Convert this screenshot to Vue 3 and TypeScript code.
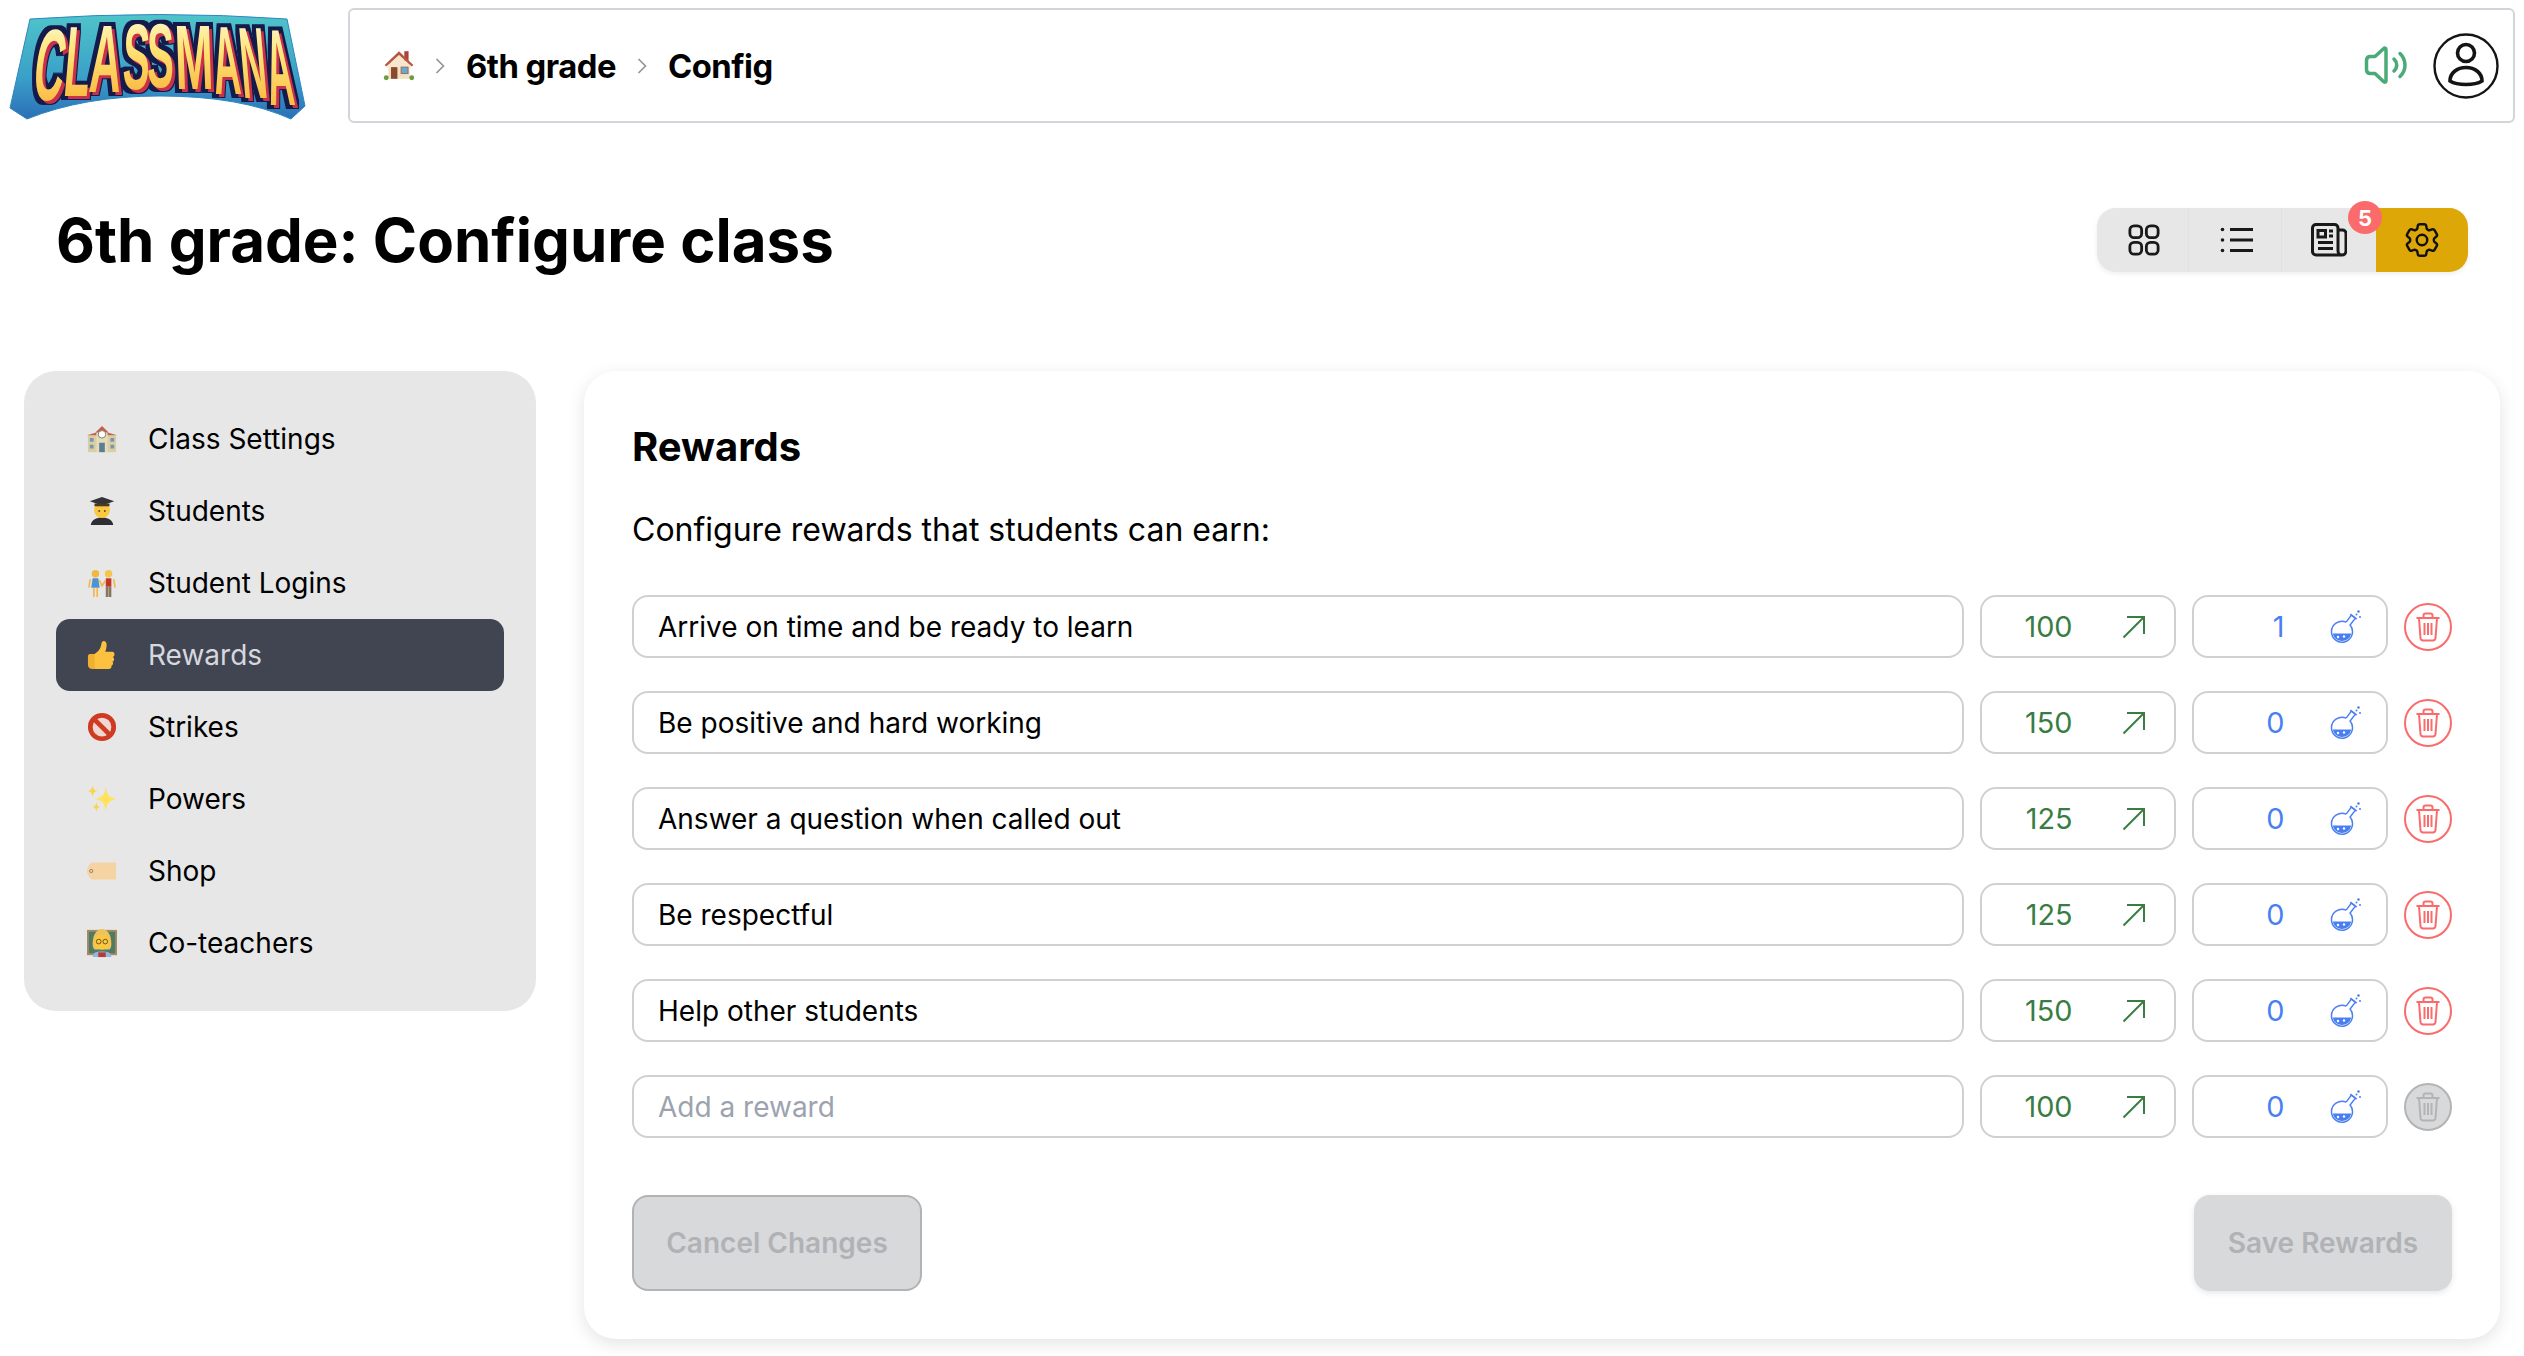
<script setup lang="ts">
interface LogoLetter { ch: string; x: number; w: number; top: number; bottom: number; skew: number; adv: number }
const raw: Array<[string, number, number, number, number, number, number]> = [
  ['C', 27, 30, 27, 100, -7, 72],
  ['L', 58, 26, 24, 96, -5, 61],
  ['A', 84, 32, 23, 92, -3, 72],
  ['S', 118, 27, 22, 89, -2, 67],
  ['S', 147, 27, 22, 87, 0, 67],
  ['M', 176, 38, 23, 89, 2, 83],
  ['A', 215, 27, 24, 94, 4, 72],
  ['N', 243, 26, 25, 98, 5, 72],
  ['A', 270, 26, 27, 105, 6, 72],
]
const letters: LogoLetter[] = raw.map(([ch, x, w, top, bottom, skew, adv]) => ({ ch, x, w, top, bottom, skew, adv }))
const letterTransform = (l: LogoLetter): string =>
  `translate(${l.x + (l.skew < 0 ? 4 : 0)},${l.bottom}) skewX(${l.skew}) scale(${l.w / l.adv},${(l.bottom - l.top) / 72})`

const nav = [
  { key: 'school', label: 'Class Settings' },
  { key: 'student', label: 'Students' },
  { key: 'couple', label: 'Student Logins' },
  { key: 'thumb', label: 'Rewards', active: true },
  { key: 'no', label: 'Strikes' },
  { key: 'spark', label: 'Powers' },
  { key: 'tag', label: 'Shop' },
  { key: 'teacher', label: 'Co-teachers' },
]
const rows = [
  { text: 'Arrive on time and be ready to learn', pts: 100, mana: 1 },
  { text: 'Be positive and hard working', pts: 150, mana: 0 },
  { text: 'Answer a question when called out', pts: 125, mana: 0 },
  { text: 'Be respectful', pts: 125, mana: 0 },
  { text: 'Help other students', pts: 150, mana: 0 },
  { text: 'Add a reward', pts: 100, mana: 0, placeholder: true },
]
</script>

<template>
  <div class="page">
    <header class="top">
      <div class="logo">
        <svg width="320" height="130" viewBox="0 0 320 130">
          <defs>
            <linearGradient id="lf" x1="0" y1="0" x2="0" y2="1">
              <stop offset="0" stop-color="#fffbe6" />
              <stop offset="0.4" stop-color="#ffe678" />
              <stop offset="1" stop-color="#f9ab30" />
            </linearGradient>
            <linearGradient id="lb" x1="0" y1="0" x2="0" y2="1">
              <stop offset="0" stop-color="#4fc4c9" />
              <stop offset="0.6" stop-color="#3aa0c8" />
              <stop offset="1" stop-color="#2a6fb8" />
            </linearGradient>
            <filter id="lfx" x="-8%" y="-25%" width="116%" height="150%" color-interpolation-filters="sRGB">
              <feMorphology in="SourceAlpha" operator="dilate" radius="3.500" result="d1" />
              <feFlood flood-color="#141a4a" />
              <feComposite in2="d1" operator="in" result="navy" />
              <feOffset in="SourceAlpha" dx="2.500" dy="3" result="o1" />
              <feFlood flood-color="#c9304a" />
              <feComposite in2="o1" operator="in" result="red" />
              <feMerge>
                <feMergeNode in="navy" />
                <feMergeNode in="red" />
                <feMergeNode in="SourceGraphic" />
              </feMerge>
            </filter>
          </defs>
          <path class="banner" d="M30 19Q160 10 287 19L305 106 291 119 Q240 96 160 96 Q84 96 27 119L10 108Z" fill="url(#lb)" />
          <g filter="url(#lfx)">
            <text
              v-for="(l, i) in letters"
              :key="i"
              :transform="letterTransform(l)"
              class="logo-letter"
              fill="url(#lf)"
            >{{ l.ch }}</text>
          </g>
        </svg>
      </div>

      <div class="crumbs">
        <svg class="home" width="34" height="34" viewBox="0 0 32 32">
          <rect x="21" y="3" width="4" height="9" fill="#a8463c" />
          <path d="M6 14h20v15H6z" fill="#f3dfc2" />
          <path d="M16 7 5 17v2h22v-2z" fill="#f8e7cd" />
          <path d="M16 3 2.500 16l1.500 1.500L16 6.500 28 17.500l1.500-1.500z" fill="#b9563f" />
          <rect x="8.500" y="18" width="6" height="11" fill="#8a4b2c" />
          <rect x="18" y="18" width="6.500" height="6" fill="#6aa7d8" stroke="#8e7a5f" />
          <circle cx="4" cy="28" r="2.300" fill="#6e9b42" />
          <circle cx="28" cy="28" r="2.300" fill="#6e9b42" />
        </svg>
        <svg class="chev" width="12" height="18" viewBox="0 0 12 18"><path d="m2.500 2 7 7-7 7" /></svg>
        <span class="crumb">6th grade</span>
        <svg class="chev" width="12" height="18" viewBox="0 0 12 18"><path d="m2.500 2 7 7-7 7" /></svg>
        <span class="crumb">Config</span>
        <span class="spacer"></span>
        <svg class="sound" width="44" height="40" viewBox="0 0 44 40">
          <path d="M22 3.500c0-1.600-1.500-1.800-2.500-.8L11 10.500H6.500C4 10.500 2.500 12 2.500 14.500v9c0 2.500 1.500 4 4 4H11l8.500 8c1 1 2.500.8 2.500-.8z" />
          <path d="M30 13c1.800 1.800 2.700 3.800 2.700 6s-.9 4.300-2.700 6" />
          <path d="M36 7.500c3.300 3.200 5 7.100 5 11.500s-1.700 8.300-5 11.500" />
        </svg>
        <svg class="user" width="66" height="66" viewBox="0 0 66 66">
          <circle cx="33" cy="33" r="31.500" class="ring" />
          <circle cx="33" cy="20" r="8.500" />
          <path d="M17 48c0-8 7-13.500 16-13.500S49 40 49 48c-4 2.500-10 3.500-16 3.500S21 50.500 17 48z" />
        </svg>
      </div>
    </header>

    <div class="title-row">
      <h1>6th grade: Configure class</h1>
      <div class="seg">
        <div class="seg-btn w91">
          <svg width="32" height="32" viewBox="0 0 34 34" class="ic">
            <rect x="2" y="2" width="12.500" height="12.500" rx="4.500" />
            <rect x="19.500" y="2" width="12.500" height="12.500" rx="4.500" />
            <rect x="2" y="19.500" width="12.500" height="12.500" rx="4.500" />
            <rect x="19.500" y="19.500" width="12.500" height="12.500" rx="4.500" />
          </svg>
        </div>
        <div class="seg-btn w93">
          <svg width="34" height="28" viewBox="0 0 34 28" class="ic">
            <path d="M10 3.500h23M10 14h23M10 24.500h23" />
            <circle cx="2.500" cy="3.500" r="1.800" class="dot" />
            <circle cx="2.500" cy="14" r="1.800" class="dot" />
            <circle cx="2.500" cy="24.500" r="1.800" class="dot" />
          </svg>
        </div>
        <div class="seg-btn w94">
          <svg width="36" height="34" viewBox="0 0 36 34" class="ic">
            <path d="M27 7h4.500A3.500 3.500 0 0 1 35 10.500V28a4 4 0 0 1-4 4H5a3.500 3.500 0 0 1-3.500-3.500V5A3.500 3.500 0 0 1 5 1.500h18.500A3.500 3.500 0 0 1 27 5v23a4 4 0 0 0 4 4" />
            <rect x="7" y="7.500" width="7.500" height="6.500" />
            <path d="M18 8h4M18 13h4M7 19.500h15M7 25.500h15" />
          </svg>
          <span class="badge">5</span>
        </div>
        <div class="seg-btn active">
          <svg width="42" height="42" viewBox="0 0 24 24" class="gear">
            <path d="M9.594 3.940c.09-.542.56-.94 1.110-.94h2.593c.55 0 1.020.398 1.110.94l.213 1.281c.063.374.313.686.645.87.074.04.147.083.22.127.325.196.72.257 1.075.124l1.217-.456a1.125 1.125 0 0 1 1.370.49l1.296 2.247a1.125 1.125 0 0 1-.26 1.431l-1.003.827c-.293.241-.438.613-.43.992a7.723 7.723 0 0 1 0 .255c-.008.378.137.75.43.991l1.004.827c.424.35.534.955.26 1.430l-1.298 2.247a1.125 1.125 0 0 1-1.369.491l-1.217-.456c-.355-.133-.75-.072-1.076.124a6.470 6.470 0 0 1-.22.128c-.331.183-.581.495-.644.869l-.213 1.281c-.09.543-.56.94-1.110.94h-2.594c-.55 0-1.019-.398-1.110-.94l-.213-1.281c-.062-.374-.312-.686-.644-.87a6.520 6.520 0 0 1-.22-.127c-.325-.196-.72-.257-1.076-.124l-1.217.456a1.125 1.125 0 0 1-1.369-.49l-1.297-2.247a1.125 1.125 0 0 1 .26-1.431l1.004-.827c.292-.24.437-.613.43-.991a6.932 6.932 0 0 1 0-.255c.007-.38-.138-.751-.43-.992l-1.004-.827a1.125 1.125 0 0 1-.26-1.430l1.297-2.247a1.125 1.125 0 0 1 1.370-.491l1.216.456c.356.133.751.072 1.076-.124.072-.044.146-.086.22-.128.332-.183.582-.495.644-.869l.214-1.280Z" />
            <circle cx="12" cy="12" r="3" />
          </svg>
        </div>
      </div>
    </div>

    <main class="body">
      <aside class="side">
        <div v-for="n in nav" :key="n.key" class="nav-item" :class="{ on: n.active }">
          <svg class="emoji" width="30" height="30" viewBox="0 0 32 32">
            <template v-if="n.key === 'school'">
              <path d="M1 12h30v18H1z" fill="#d8cfa6" />
              <path d="M10 9 16 3l6 6v21H10z" fill="#e5dcba" />
              <path d="M0 12 10 9v3zM32 12 22 9v3zM9 9l7-7 7 7z" fill="#c2604c" />
              <circle cx="16" cy="11" r="4" fill="#fff" stroke="#7f7a66" />
              <rect x="13" y="20" width="6" height="10" fill="#5d7c96" />
              <path d="M3 15h4v4H3zM3 22h4v4H3zM25 15h4v4h-4zM25 22h4v4h-4z" fill="#7d95a8" />
            </template>
            <template v-else-if="n.key === 'student'">
              <path d="M4 31c1-6 6-8 12-8s11 2 12 8z" fill="#2f2f33" />
              <circle cx="16" cy="15" r="8.500" fill="#fbc93f" />
              <path d="M16 1 3 5.500 16 10l13-4.500z" fill="#333337" />
              <path d="M8 8h16v3H8z" fill="#4a3a22" />
              <circle cx="13" cy="16" r="1" fill="#543" />
              <circle cx="19" cy="16" r="1" fill="#543" />
            </template>
            <template v-else-if="n.key === 'couple'">
              <circle cx="9" cy="6" r="4" fill="#f0b93c" />
              <circle cx="23" cy="6" r="4" fill="#f4c64e" />
              <path d="M6 11h6l1.500 10h-9z" fill="#4c93d4" />
              <path d="M20 11h6v9h-6z" fill="#c2352b" />
              <path d="M6.500 21h1.800v10H6.500zM10 21h1.800v10H10z" fill="#f2b84a" />
              <path d="M20 20h2.800v11H20zM23.200 20H26v11h-2.800z" fill="#8a7660" />
              <path d="M3.500 12 2 21M28.500 12l1.500 9M13 13l3 6 4-6" stroke="#f2b84a" stroke-width="1.700" fill="none" />
            </template>
            <template v-else-if="n.key === 'thumb'">
              <path d="M3 15c-1 0-2 1-2 2.500V26c0 3 2 5 5 5h14c2 0 3-1 3-2.500H9V15z" fill="#f0b030" />
              <path d="M8 15c3-2 6-5 7-9 .5-3 1-5 3-5 3 0 3.500 4 2.500 8l-1 3.500H27c3 0 3 5 .5 5.500 2 1 2 4.500-.5 5 1.500 1 1 4-1 4.500.5 2-.5 3.500-3 3.500H13c-3 0-5-1-5-3z" fill="#fcc23f" />
            </template>
            <template v-else-if="n.key === 'no'">
              <circle cx="16" cy="16" r="12.500" fill="#f0d8d0" stroke="#cf3a22" stroke-width="5" />
              <path d="M7 7l18 18" stroke="#cf3a22" stroke-width="5" />
            </template>
            <template v-else-if="n.key === 'spark'">
              <path d="M20 3c1 8 3 11 11 13-8 2-10 5-11 13-1-8-3-11-11-13 8-2 10-5 11-13z" fill="#ffe25e" />
              <path d="M6 1c.5 4 1.500 5.500 5 6.500-3.500 1-4.500 2.500-5 6.500-.5-4-1.500-5.500-5-6.500 3.500-1 4.500-2.500 5-6.500z" fill="#f8d64a" />
              <path d="M10 19c.5 3.500 1 4.500 4 5.500-3 1-3.500 2-4 5.500-.5-3.500-1-4.500-4-5.500 3-1 3.500-2 4-5.500z" fill="#f8d64a" />
            </template>
            <template v-else-if="n.key === 'tag'">
              <path d="M6 7h25v18H6C3 25 0 19 0 16s3-9 6-9z" fill="#f5d3a3" />
              <circle cx="4.500" cy="16" r="1.700" fill="#f5d3a3" stroke="#8d7c70" />
            </template>
            <template v-else>
              <rect x="1" y="3" width="30" height="25" fill="#4f7a63" stroke="#a88a62" stroke-width="2" />
              <path d="M6 31c0-5 4-6 10-6s10 1 10 6z" fill="#8fb7e0" />
              <path d="M12 26h8v5h-8z" fill="#b73a34" />
              <path d="M6 17C6 6 11 1 16 1s10 5 10 16c0 3-1 6-3 6H9c-2 0-3-3-3-6z" fill="#edc35c" />
              <circle cx="16" cy="15" r="8" fill="#fbc93f" />
              <circle cx="12.500" cy="14.500" r="2.500" fill="none" stroke="#6b4a1e" />
              <circle cx="19.500" cy="14.500" r="2.500" fill="none" stroke="#6b4a1e" />
            </template>
          </svg>
          <span>{{ n.label }}</span>
        </div>
      </aside>

      <section class="card">
        <h2>Rewards</h2>
        <p class="sub">Configure rewards that students can earn:</p>
        <div class="rows">
          <div v-for="(r, i) in rows" :key="i" class="row">
            <div class="field" :class="{ ph: r.placeholder }">{{ r.text }}</div>
            <div class="pill green">
              <span class="val">{{ r.pts }}</span>
              <svg class="arrow" width="24" height="24" viewBox="0 0 24 24"><path d="M1.500 22.500 22 2M5 2h17v17" /></svg>
            </div>
            <div class="pill blue">
              <span class="val">{{ r.mana }}</span>
              <svg class="flask" width="32" height="34" viewBox="0 0 32 34">
                <path d="M2.700 23.500H21.300A9.500 9.500 0 0 1 2.700 23.500Z" fill="currentColor" />
                <path d="M16.100 12.100 21.400 5.100M25.400 8.100 20.100 15.100A10.500 10.500 0 1 1 16.100 12.100" fill="none" stroke="currentColor" stroke-width="1.500" />
                <path d="M20.200 4.300 26.600 9" stroke="currentColor" stroke-width="1.700" />
                <circle cx="26.500" cy="4.500" r="1" fill="currentColor" />
                <circle cx="30" cy="7" r="1" fill="currentColor" />
                <circle cx="28.500" cy="1.500" r="1.300" fill="currentColor" />
                <circle cx="8" cy="27" r="1.200" fill="#fff" />
                <circle cx="14" cy="26.500" r="1.200" fill="#fff" />
              </svg>
            </div>
            <div class="trash" :class="{ off: r.placeholder }">
              <svg width="26" height="30" viewBox="0 0 26 30">
                <path d="M1.500 6h23M8.500 6V3.500A2 2 0 0 1 10.500 1.500h5a2 2 0 0 1 2 2V6M4 6l1.500 20a2.500 2.500 0 0 0 2.500 2.500h10a2.500 2.500 0 0 0 2.500-2.500L22 6M9.500 11v12M13 11v12M16.500 11v12" />
              </svg>
            </div>
          </div>
        </div>
        <div class="actions">
          <div class="btn cancel">Cancel Changes</div>
          <div class="btn save">Save Rewards</div>
        </div>
      </section>
    </main>
  </div>
</template>

<style scoped>
.page {
  width: 2524px;
  height: 1356px;
  background: #fff;
  font-family: Inter, "Liberation Sans", sans-serif;
  color: #000;
  overflow: hidden;
}
.top {
  display: flex;
  align-items: flex-start;
  padding-top: 8px;
}
.logo {
  width: 348px;
  height: 115px;
  flex: none;
  margin-top: -8px;
}
.logo-letter {
  font-family: "Liberation Sans", sans-serif;
  font-weight: 700;
  font-size: 100px;
}
.banner { stroke: #2f86bf; stroke-width: 1px; stroke-linejoin: round; }
.crumbs {
  width: 2167px;
  height: 115px;
  box-sizing: border-box;
  border: 2px solid #d3d5da;
  border-radius: 6px;
  display: flex;
  align-items: center;
  padding: 0 14px 0 32px;
}
.home { margin-right: 18px; margin-top: -2px; }
.chev { fill: none; stroke: #8f9299; stroke-width: 1.600; }
.crumb { font-size: 32.800px; font-weight: 700; margin: 0 20px 0 20px; letter-spacing: -0.5px; }
.spacer { flex: 1; }
.sound { margin-right: 25px; fill: none; stroke: #4aaa78; stroke-width: 3.500; stroke-linecap: round; stroke-linejoin: round; }
.user { fill: none; stroke: #141414; stroke-width: 3.600; }
.user .ring { stroke-width: 2.400; }
.title-row {
  display: flex;
  justify-content: space-between;
  align-items: center;
  height: 64px;
  margin-top: 85px;
  padding: 0 56px;
}
h1 {
  margin: 0;
  font-size: 60px;
  font-weight: 700;
}
.seg {
  display: flex;
  height: 64px;
  border-radius: 19px;
  background: #e7e7e7;
  box-shadow: 0 2px 5px rgba(0, 0, 0, 0.07);
}
.seg-btn {
  display: flex;
  align-items: center;
  justify-content: center;
  position: relative;
  border-right: 1px solid #e1e1e1;
}
.w91 { width: 88px; padding-left: 3px; }
.w93 { width: 89px; padding-left: 3px; }
.w94 { width: 94px; border-right: none; }
.active {
  width: 92px;
  background: #dda807;
  border: none;
  border-radius: 0 19px 19px 0;
}
.ic { fill: none; stroke: #191919; stroke-width: 3; }
.ic .dot { fill: #191919; stroke: none; }
.gear { fill: none; stroke: #111; stroke-width: 1.400; }
.badge {
  position: absolute;
  top: -7px;
  right: -6px;
  width: 34px;
  height: 33px;
  border-radius: 50%;
  background: #fb6b6b;
  color: #fff;
  font-weight: 700;
  font-size: 22px;
  display: flex;
  align-items: center;
  justify-content: center;
  z-index: 1;
}
.body {
  display: flex;
  gap: 48px;
  margin-top: 99px;
  padding: 0 24px;
  align-items: flex-start;
}
.side {
  width: 512px;
  flex: none;
  box-sizing: border-box;
  padding: 32px;
  background: #e7e7e7;
  border-radius: 32px;
}
.nav-item {
  height: 72px;
  border-radius: 14px;
  display: flex;
  align-items: center;
  padding-left: 31px;
  font-size: 28px;
  gap: 31px;
}
.nav-item.on {
  background: #414552;
  color: #d6d8df;
}
.emoji { flex: none; }
.card {
  width: 1916px;
  flex: none;
  box-sizing: border-box;
  padding: 48px;
  height: 968px;
  background: #fff;
  border-radius: 32px;
  box-shadow: 0 5px 18px rgba(0, 0, 0, 0.11);
}
h2 {
  margin: 0;
  font-size: 40px;
  line-height: 56px;
  font-weight: 700;
}
.sub {
  margin: 31px 0 41px;
  font-size: 32px;
  line-height: 48px;
}
.rows {
  display: flex;
  flex-direction: column;
  gap: 33px;
}
.row {
  display: flex;
  align-items: center;
  gap: 16.500px;
  height: 63px;
}
.field {
  flex: 1;
  height: 63px;
  box-sizing: border-box;
  border: 2px solid #d0d0d0;
  border-radius: 16px;
  padding-left: 24px;
  display: flex;
  align-items: center;
  font-size: 28px;
}
.field.ph { color: #9ca3af; }
.pill {
  width: 195.500px;
  height: 63px;
  flex: none;
  box-sizing: border-box;
  border: 2px solid #d0d0d0;
  border-radius: 16px;
  display: flex;
  align-items: center;
  position: relative;
  font-size: 28.800px;
}
.val { position: absolute; right: 101px; }
.green { color: #3a7d44; }
.blue { color: #4a7ff2; }
.arrow {
  position: absolute;
  right: 28px;
  fill: none;
  stroke: currentColor;
  stroke-width: 2;
}
.flask {
  position: absolute;
  right: 24px;
  top: 13px;
}
.trash {
  width: 48px;
  height: 48px;
  flex: none;
  box-sizing: border-box;
  border: 2.500px solid #fb6b6b;
  border-radius: 50%;
  display: flex;
  align-items: center;
  justify-content: center;
  fill: none;
  stroke: #fb6b6b;
  stroke-width: 2;
}
.trash.off {
  background: #d8d9db;
  border-color: #b4b4b4;
  stroke: #b4b4b4;
}
.actions {
  display: flex;
  justify-content: space-between;
  margin-top: 57px;
}
.btn {
  height: 96px;
  box-sizing: border-box;
  border-radius: 16px;
  background: #d8d9db;
  color: #b0b2b5;
  font-weight: 600;
  font-size: 28px;
  display: flex;
  align-items: center;
  justify-content: center;
}
.cancel { width: 290px; border: 2px solid #b2b3b5; }
.save { width: 258px; box-shadow: 0 2px 6px rgba(0, 0, 0, 0.1); }
</style>

<style>
html, body { margin: 0; background: #fff; }
</style>
